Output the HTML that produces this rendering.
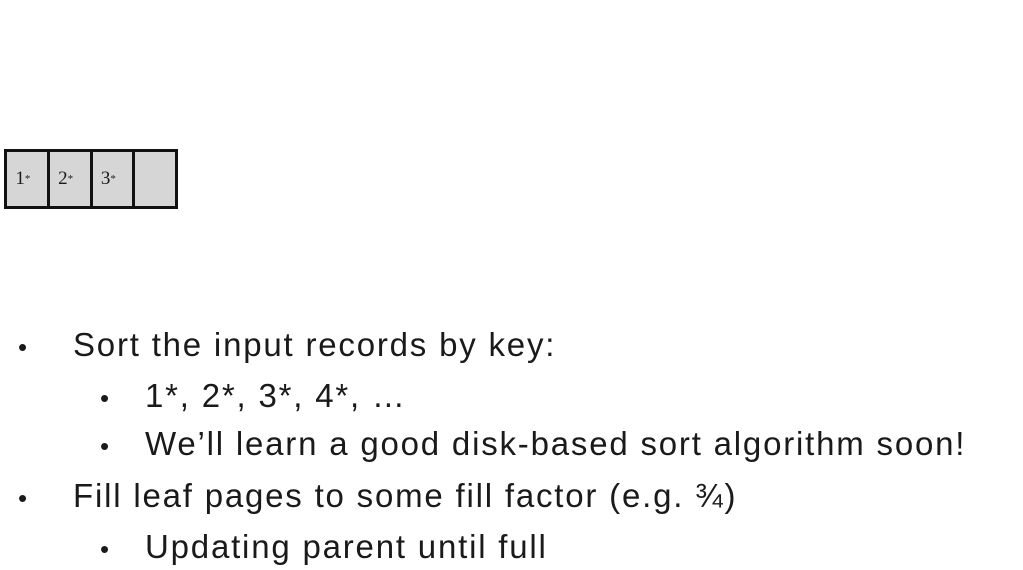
<!DOCTYPE html>
<html><head><style>
body{margin:0;width:1023px;height:570px;background:#fff;overflow:hidden;position:relative;font-family:"Liberation Sans",sans-serif;color:#1a1a1a}
.box{position:absolute;left:4px;top:149px;width:168px;height:54px;border:3px solid #111;background:#111;display:flex;gap:3px}
.c{flex:1;background:#d6d6d6;font-family:"Liberation Serif",serif;font-size:19px;display:flex;align-items:center;justify-content:center;padding-right:8px}
.c sup{font-size:11px;vertical-align:7px}
.l{position:absolute;font-size:33px;letter-spacing:1.8px;white-space:nowrap;line-height:1}
.b{position:absolute;font-size:26px;line-height:1}
</style></head><body>
<div class="box"><div class="c">1<sup>*</sup></div><div class="c">2<sup>*</sup></div><div class="c">3<sup>*</sup></div><div class="c"></div></div>
<div class="b" style="left:18px;top:334px">•</div><div class="l" style="left:73px;top:328px">Sort the input records by key:</div>
<div class="b" style="left:100px;top:385px">•</div><div class="l" style="left:145px;top:379px">1*, 2*, 3*, 4*, …</div>
<div class="b" style="left:100px;top:433px">•</div><div class="l" style="left:145px;top:427px">We’ll learn a good disk-based sort algorithm soon!</div>
<div class="b" style="left:18px;top:485px">•</div><div class="l" style="left:73px;top:479px">Fill leaf pages to some fill factor (e.g. ¾)</div>
<div class="b" style="left:100px;top:536px">•</div><div class="l" style="left:145px;top:530px">Updating parent until full</div>
</body></html>
